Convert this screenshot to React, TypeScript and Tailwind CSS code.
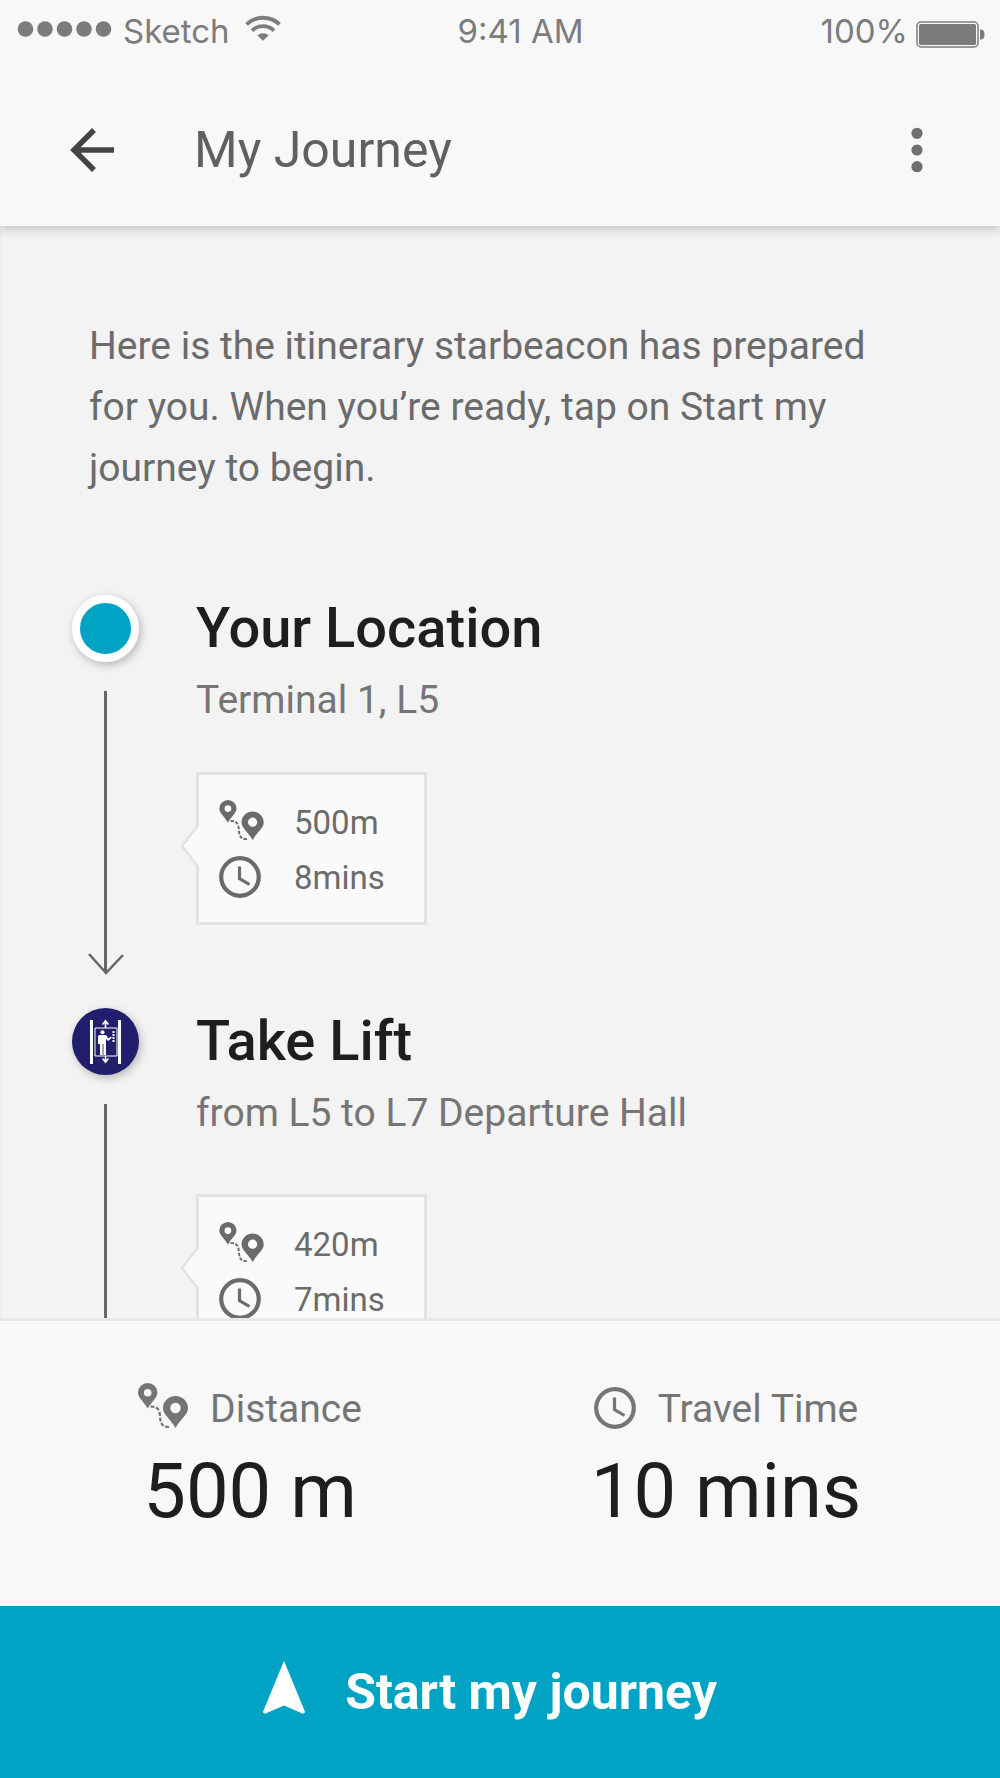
import type { ReactNode } from 'react'

interface Step {
  id: string
  title: string
  subtitle: string
  distance: string
  duration: string
  marker: 'location' | 'lift'
  height: string
  cardMargin: string
}

const steps: Step[] = [
  {
    id: 'location',
    title: 'Your Location',
    subtitle: 'Terminal 1, L5',
    distance: '500m',
    duration: '8mins',
    marker: 'location',
    height: 'h-[413px]',
    cardMargin: 'mt-[48px]'
  },
  {
    id: 'lift',
    title: 'Take Lift',
    subtitle: 'from L5 to L7 Departure Hall',
    distance: '420m',
    duration: '7mins',
    marker: 'lift',
    height: 'h-[424px]',
    cardMargin: 'mt-[57px]'
  }
]

const RouteIcon = ({ className }: { className: string }) => (
  <svg viewBox="0 0 50 45" className={className} fill="currentColor" aria-hidden="true">
    <path
      fillRule="evenodd"
      d="M9.700 0a9.700 9.700 0 0 1 9.700 9.700c0 5-6.200 9.500-9.700 15.800C6.200 19.200 0 14.700 0 9.700A9.700 9.700 0 0 1 9.700 0Zm0 5.900a3.800 3.800 0 1 0 0 7.600 3.800 3.800 0 0 0 0-7.600Z"
    />
    <path
      fillRule="evenodd"
      d="M37.500 13A12.300 12.300 0 0 1 50 25.300c0 6.500-8 11.200-12.500 19.700C33 36.500 25 31.800 25 25.300A12.300 12.300 0 0 1 37.500 13Zm0 6.800a5.200 5.200 0 1 0 0 10.400 5.200 5.200 0 0 0 0-10.400Z"
    />
    <path
      d="M12.500 23.500c7 0 9 3 9.500 9.500.5 8 2 11.500 10.500 11"
      fill="none"
      stroke="currentColor"
      strokeWidth="2.200"
      strokeDasharray="4 1.600"
    />
  </svg>
)

const ClockIcon = () => (
  <svg viewBox="0 0 42 42" className="mb-[2px] size-[42px]" fill="none" stroke="currentColor" aria-hidden="true">
    <circle cx="21" cy="21" r="18.800" strokeWidth="4.200" />
    <path d="M20.500 10.500v12l10 6" strokeWidth="3.200" />
  </svg>
)

const LiftIcon = () => (
  <svg viewBox="0 0 67 67" className="size-[67px]" fill="#fff" aria-hidden="true">
    <path d="M18 12h3v44h-3zM46 12h3v44h-3z" />
    <path d="M23 20h22v28H23z" fill="none" stroke="#fff" strokeWidth="1" />
    <path d="M33.500 11.500l3.500 4.500-1 1-1.700-1.700V20h-1.600v-4.700L31 17l-1-1zM33.500 55.500l3.500-4.500-1-1-1.700 1.700V48h-1.600v3.700L31 50l-1 1z" />
    <circle cx="30.500" cy="24.300" r="2" />
    <path d="M27 27h7l2.500 3.500 2.500-2 .8 1.200-3.600 3.300-2.200-2V47h-2.600V36h-.8v11H28V36h-2v-7.500z" />
    <path d="M40.500 23h2v2h-2zM40.500 26h2v2h-2zM40.500 29h2v2h-2zM40.500 32h2v2h-2z" />
  </svg>
)

const StatusBar = () => (
  <div className="grid h-[64px] grid-cols-3 items-center pr-[15px] pl-[16px] font-[Inter,sans-serif] text-[33px] text-[#7c7c7c]">
    <div className="flex items-center gap-[11px]">
      <svg viewBox="0 0 96 16" className="mb-[6px] h-[16px] w-[96px]" fill="currentColor" aria-hidden="true">
        <circle cx="9.500" cy="8" r="7.800" />
        <circle cx="29" cy="8" r="7.800" />
        <circle cx="48.500" cy="8" r="7.800" />
        <circle cx="68" cy="8" r="7.800" />
        <circle cx="87.500" cy="8" r="7.800" />
      </svg>
      <span>Sketch</span>
      <svg viewBox="0 0 36 26" className="mb-[8px] ml-[4px] h-[26px] w-[36px]" fill="none" stroke="currentColor" strokeWidth="3.800" aria-hidden="true">
        <path d="M1.500 9.300a24 24 0 0 1 33 0M7 15.600a16 16 0 0 1 22 0" />
        <path d="M12.400 20.500a8 8 0 0 1 11.200 0L18 25.800z" fill="currentColor" stroke="none" />
      </svg>
    </div>
    <span className="pl-[40px] text-center">9:41 AM</span>
    <div className="flex items-center justify-end gap-[8px]">
      <span>100%</span>
      <svg viewBox="0 0 69 27" className="mt-[4px] h-[27px] w-[69px]" fill="currentColor" aria-hidden="true">
        <rect x="1" y="1" width="61" height="25" rx="4" fill="none" stroke="currentColor" strokeWidth="1.500" />
        <rect x="3" y="3" width="57" height="21" rx="1.500" />
        <path d="M64 8.500c3 0 4.500 1 4.500 5s-1.500 5-4.500 5z" />
      </svg>
    </div>
  </div>
)

const Marker = ({ type }: { type: Step['marker'] }) =>
  type === 'location' ? (
    <div className="size-[67px] rounded-full border-8 border-white bg-[#00a3c4] shadow-[2px_3px_8px_rgba(0,0,0,0.25)]" />
  ) : (
    <div className="size-[67px] rounded-full bg-[#211f6b] shadow-[2px_3px_8px_rgba(0,0,0,0.25)]">
      <LiftIcon />
    </div>
  )

const StepCard = ({ distance, duration }: { distance: string; duration: string }) => (
  <div className="relative h-[153px] w-[231px] border-3 border-[#e2e2e2] bg-[#fafafa] pt-[20px] pl-[20px] text-[33px] text-[#6b6b6b]">
    <svg viewBox="0 0 19 42" className="absolute top-[50px] -left-[19px] h-[42px] w-[19px]" aria-hidden="true">
      <path d="M19 1v40L2 21z" fill="#fafafa" />
      <path d="M17.500 1L2 21l15.500 20" fill="none" stroke="#e2e2e2" strokeWidth="2.500" />
    </svg>
    <div className="flex h-[55px] items-center gap-[30px]">
      <RouteIcon className="mb-[5px] h-[40px] w-[45px]" />
      <span>{distance}</span>
    </div>
    <div className="flex h-[55px] items-center gap-[33px]">
      <ClockIcon />
      <span>{duration}</span>
    </div>
  </div>
)

const StepItem = ({ step }: { step: Step }) => (
  <li className={`flex gap-[57px] ${step.height}`}>
    <div className="flex w-[67px] flex-col items-center pb-[33px]">
      <Marker type={step.marker} />
      <div className="mt-[29px] w-[3px] flex-1 bg-[#666]" />
      <svg viewBox="0 0 36 22" className="-mt-[20px] h-[22px] w-[36px]" fill="none" stroke="#666" strokeWidth="2.500" aria-hidden="true">
        <path d="M1 1l17 19L35 2" />
      </svg>
    </div>
    <div>
      <h2 className="text-[56px] leading-[66px] font-medium text-[#1e1e1e]">{step.title}</h2>
      <p className="mt-[15px] text-[39px] leading-[48px] text-[#757575]">{step.subtitle}</p>
      <div className={step.cardMargin}>
        <StepCard distance={step.distance} duration={step.duration} />
      </div>
    </div>
  </li>
)

const Stat = ({ icon, label, value }: { icon: ReactNode; label: string; value: string }) => (
  <div className="flex flex-1 flex-col items-center">
    <dt className="flex h-[52px] items-center gap-[22px] text-[39px] text-[#757575]">
      {icon}
      {label}
    </dt>
    <dd className="mt-[10px] text-[76px] leading-[92px] text-[#1e1e1e]">{value}</dd>
  </div>
)

const App = () => (
  <div className="flex h-screen flex-col bg-[#f3f3f3] font-[Roboto,sans-serif]">
    <header className="relative h-[226px] shrink-0 bg-[#f8f8f8] shadow-[0_2px_10px_rgba(0,0,0,0.25)]">
      <StatusBar />
      <div className="flex h-[172px] items-center pr-[59px] pl-[70px]">
        <button type="button" aria-label="Back">
          <svg viewBox="0 0 44 44" className="size-[44px]" fill="none" stroke="#444" strokeWidth="5.500" aria-hidden="true">
            <path d="M44 22H4M24 2L4 22l20 20" />
          </svg>
        </button>
        <h1 className="ml-[80px] flex-1 text-[50px] text-[#625f5f]">My Journey</h1>
        <button type="button" aria-label="More options" className="flex w-[48px] justify-center">
          <svg viewBox="0 0 12 46" className="h-[46px] w-[12px]" fill="#6f6f6f" aria-hidden="true">
            <circle cx="6" cy="6.300" r="5.600" />
            <circle cx="6" cy="23" r="5.600" />
            <circle cx="6" cy="39.700" r="5.600" />
          </svg>
        </button>
      </div>
    </header>

    <main className="min-h-0 flex-1 overflow-hidden border-l-2 border-[#ececec] pt-[90px]">
      <p className="mr-[100px] ml-[87px] text-[39px] leading-[61px] text-[#6b6b6b]">
        Here is the itinerary starbeacon has prepared for you. When you’re ready, tap on Start my journey to begin.
      </p>
      <ol className="mt-[96px] pl-[70px]">
        {steps.map((step) => (
          <StepItem key={step.id} step={step} />
        ))}
      </ol>
    </main>

    <footer className="relative shrink-0 border-t-3 border-[#e8e8e8] bg-[#f8f8f8]">
      <dl className="flex h-[285px] pt-[62px] pr-[36px] pl-[12px]">
        <Stat icon={<RouteIcon className="mb-[8px] h-[45px] w-[50px]" />} label="Distance" value="500 m" />
        <Stat icon={<ClockIcon />} label="Travel Time" value="10 mins" />
      </dl>
      <button
        type="button"
        className="flex h-[172px] w-full items-center justify-center gap-[40px] bg-[#00a3c4] pr-[20px] text-[50px] font-bold text-white"
      >
        <svg viewBox="0 0 42 53" className="mb-[10px] h-[53px] w-[42px]" fill="currentColor" aria-hidden="true">
          <path d="M21 0l20.700 50c.6 1.600-.6 3-2.300 2.500L21 44.500l-18.400 8C.9 53-.3 51.600.3 50z" />
        </svg>
        Start my journey
      </button>
    </footer>
  </div>
)

export default App
